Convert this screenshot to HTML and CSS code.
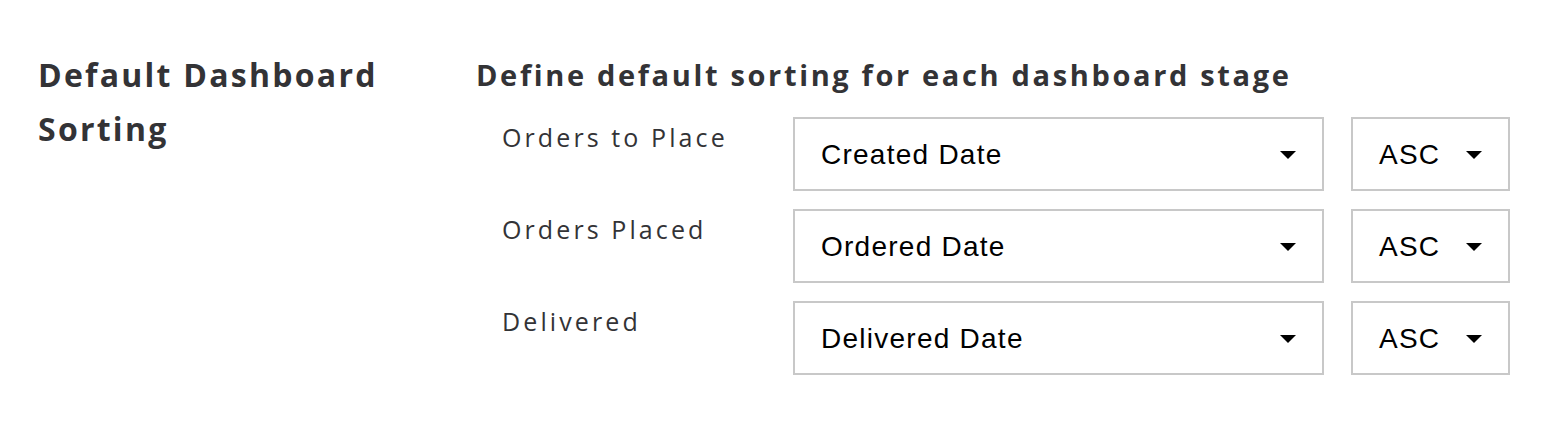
FILE: index.html
```html
<!DOCTYPE html>
<html lang="en">
<head>
<meta charset="utf-8">
<title>Default Dashboard Sorting</title>
<link rel="stylesheet" href="styles.css">
</head>
<body>
<section class="setting">
  <h2 class="setting-title">Default Dashboard<br>Sorting</h2>
  <div class="setting-body">
    <h3 class="setting-desc">Define default sorting for each dashboard stage</h3>
    <div class="rows">
      <div class="row">
        <div class="row-label">Orders to Place</div>
        <div class="select select-field"><span>Created Date</span><svg class="caret" viewBox="0 0 16 8"><path d="M0 0H16L8 8Z"/></svg></div>
        <div class="select select-order"><span>ASC</span><svg class="caret" viewBox="0 0 16 8"><path d="M0 0H16L8 8Z"/></svg></div>
      </div>
      <div class="row">
        <div class="row-label">Orders Placed</div>
        <div class="select select-field"><span>Ordered Date</span><svg class="caret" viewBox="0 0 16 8"><path d="M0 0H16L8 8Z"/></svg></div>
        <div class="select select-order"><span>ASC</span><svg class="caret" viewBox="0 0 16 8"><path d="M0 0H16L8 8Z"/></svg></div>
      </div>
      <div class="row">
        <div class="row-label">Delivered</div>
        <div class="select select-field"><span>Delivered Date</span><svg class="caret" viewBox="0 0 16 8"><path d="M0 0H16L8 8Z"/></svg></div>
        <div class="select select-order"><span>ASC</span><svg class="caret" viewBox="0 0 16 8"><path d="M0 0H16L8 8Z"/></svg></div>
      </div>
    </div>
  </div>
</section>
</body>
</html>
```

FILE: styles.css
```css
html, body {
  margin: 0;
  padding: 0;
  background: #ffffff;
}

body {
  font-family: "Open Sans", "Liberation Sans", sans-serif;
  color: #333336;
}

.setting {
  display: flex;
  padding: 48px 0 0 38px;
}

.setting-title {
  margin: 0;
  width: 438px;
  flex: none;
  font-size: 32px;
  line-height: 54px;
  font-weight: 700;
  letter-spacing: 2.25px;
}

.setting-desc {
  margin: 0;
  font-size: 29px;
  line-height: 54px;
  font-weight: 700;
  letter-spacing: 2.65px;
}

.setting-body {
  display: flex;
  flex-direction: column;
}

.rows {
  display: flex;
  flex-direction: column;
  gap: 18px;
  margin-top: 15px;
  padding-left: 26px;
}

.row {
  display: flex;
  align-items: flex-start;
}

.row-label {
  width: 291px;
  flex: none;
  font-size: 25px;
  line-height: 40px;
  letter-spacing: 3.1px;
  color: #333336;
}

.select {
  box-sizing: border-box;
  height: 74px;
  border: 2px solid #c8c8c8;
  display: flex;
  align-items: center;
  justify-content: space-between;
  padding: 1px 26px 0 26px;
  font-family: "Liberation Sans", Arial, sans-serif;
  font-size: 28px;
  letter-spacing: 1.25px;
  color: #000000;
  flex: none;
}

.select-field {
  width: 531px;
}

.select-order {
  width: 159px;
  margin-left: 27px;
}

.caret {
  width: 16px;
  height: 8px;
  fill: #000000;
  flex: none;
}
```
